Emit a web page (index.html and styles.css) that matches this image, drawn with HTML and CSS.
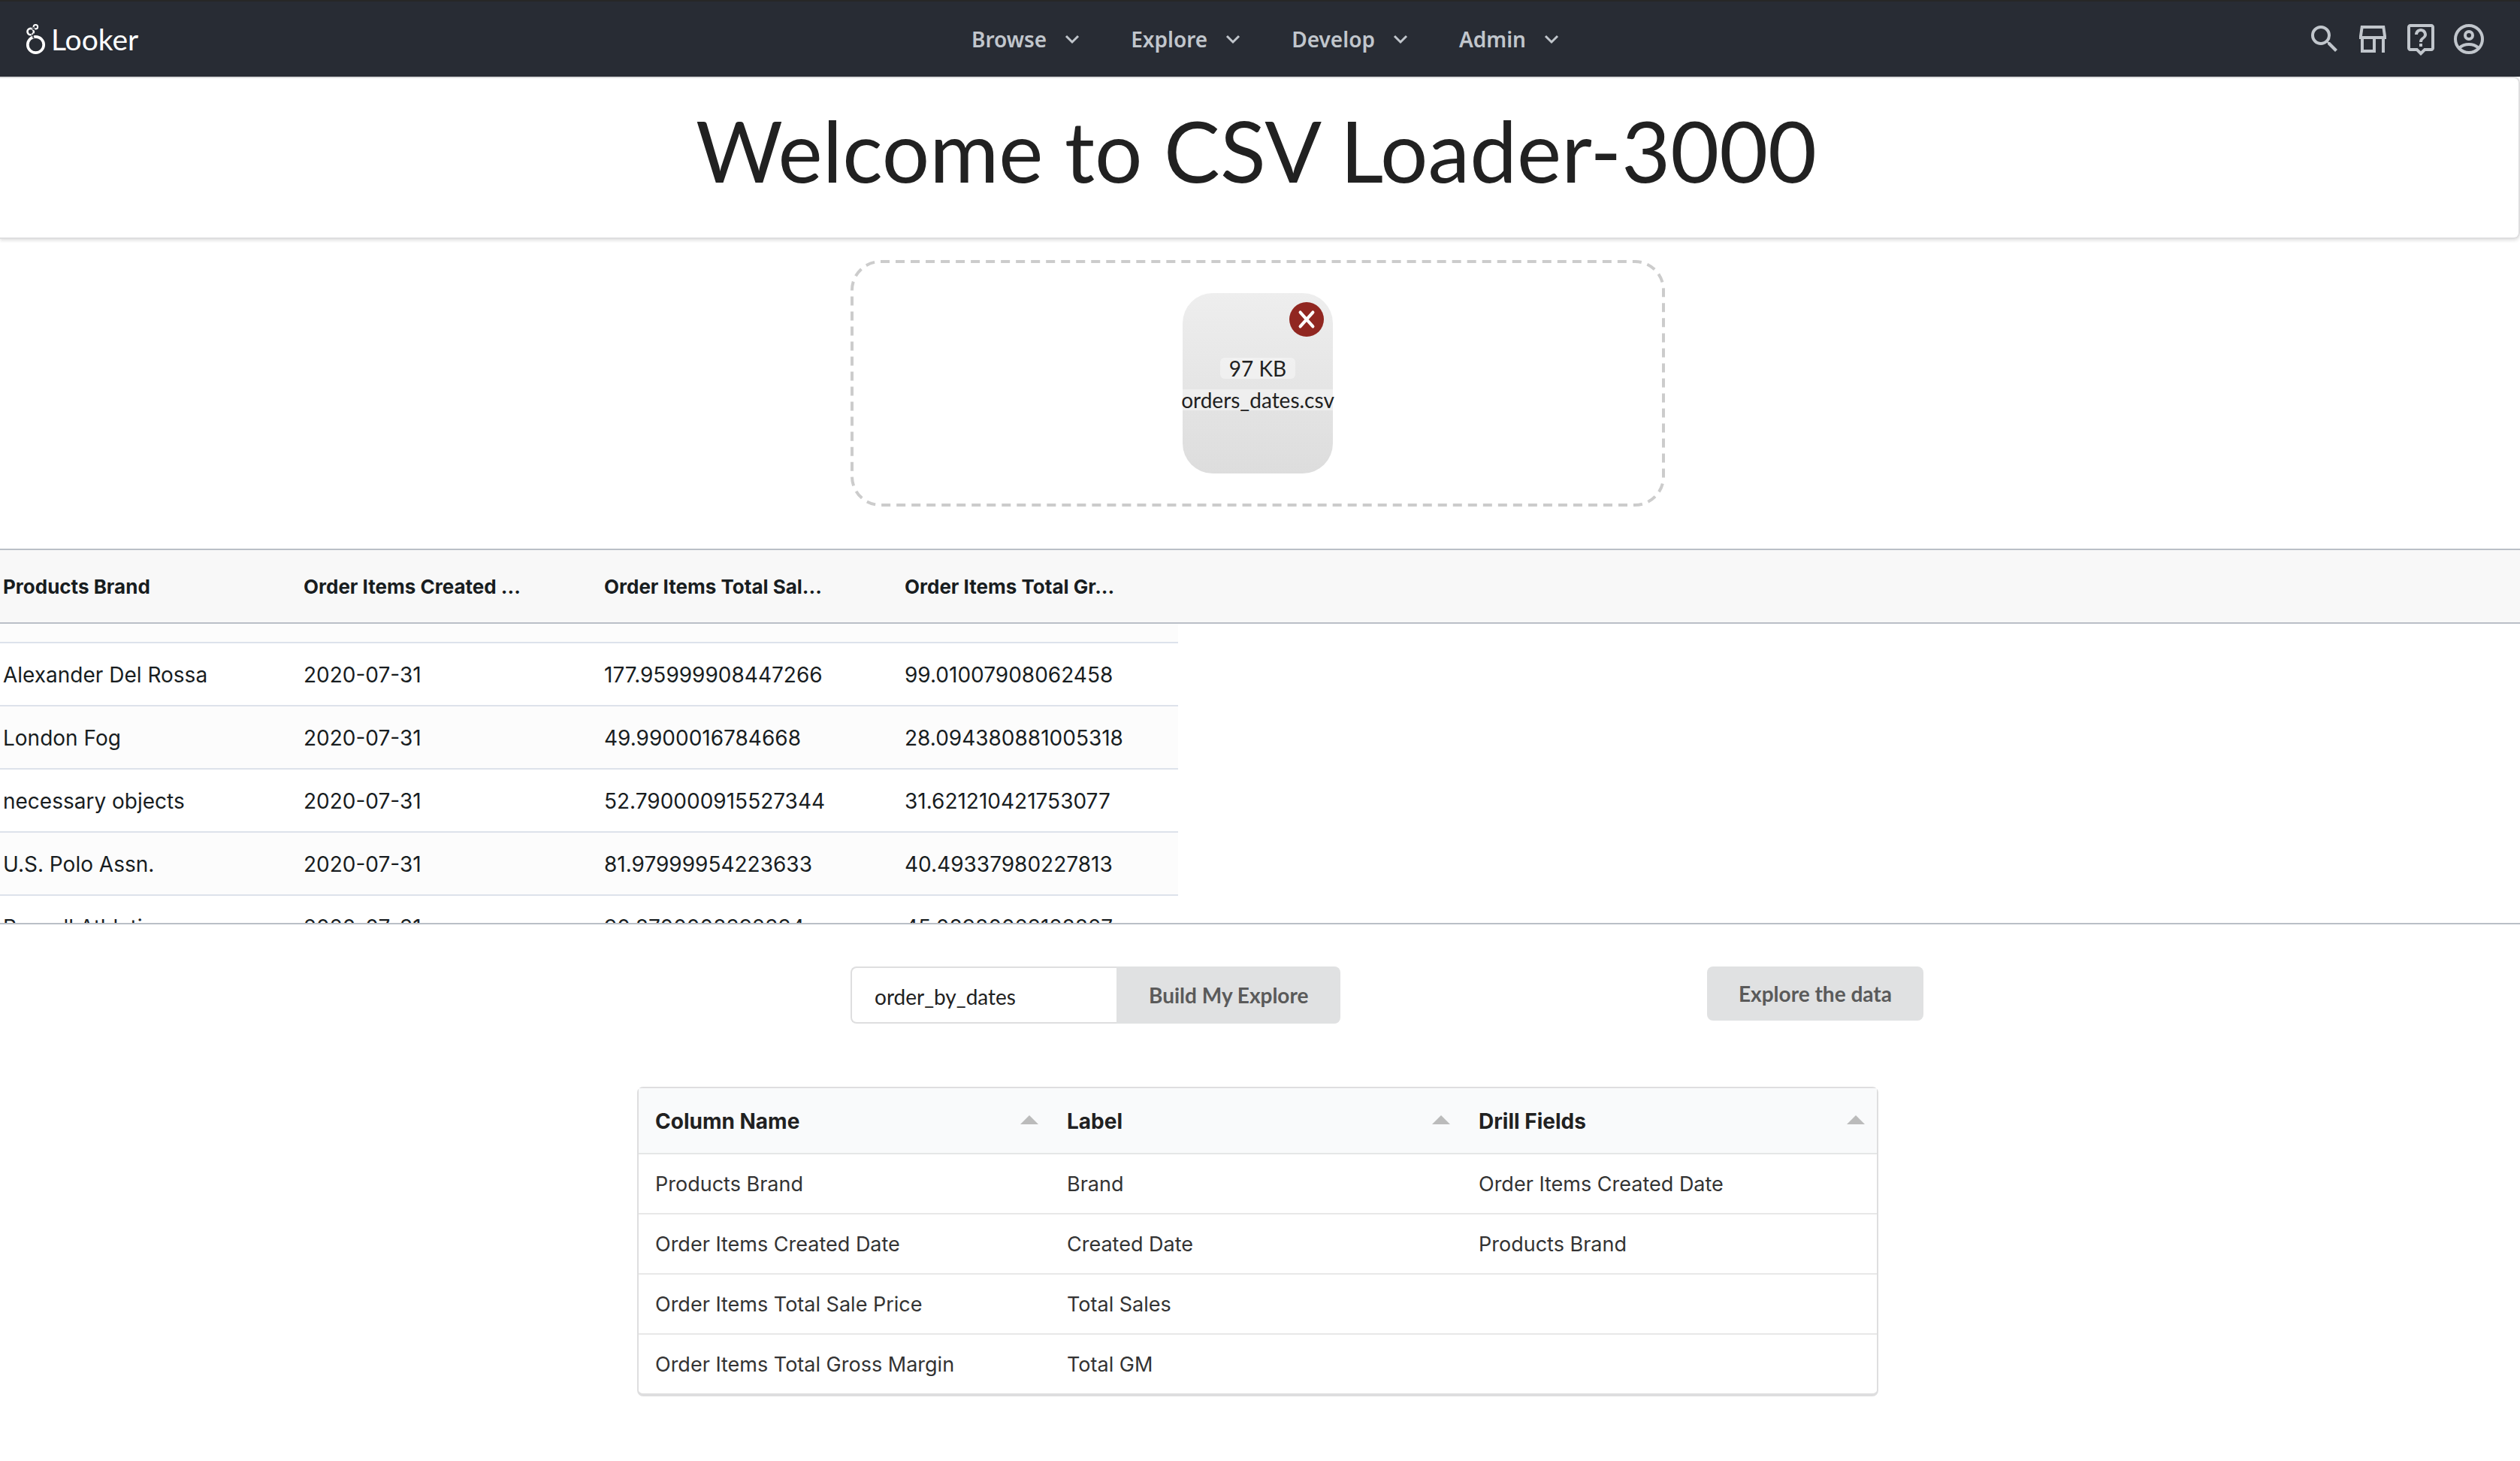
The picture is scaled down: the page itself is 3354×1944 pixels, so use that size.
FILE: index.html
```html
<!DOCTYPE html>
<html lang="en">
<head>
<meta charset="utf-8">
<title>CSV Loader-3000</title>
<link rel="stylesheet" href="styles.css">
</head>
<body>
<header class="topbar">
  <a class="logo" href="#">
    <svg class="logo-mark" viewBox="0 0 28 44" aria-hidden="true">
      <g fill="none" stroke="#fff">
        <circle cx="13.5" cy="29.5" r="10.7" stroke-width="3.7"/>
        <circle cx="6.7" cy="12.1" r="4.2" stroke-width="2.6"/>
        <circle cx="13.4" cy="5.7" r="2.8" stroke-width="2"/>
      </g>
      <g fill="none" stroke="#282c34" stroke-width="1.3">
        <path d="M8 15.5l3.4 5.500M10.800 14.500l-1 6M8.500 8l5 3M10.500 6l1.500 4"/>
      </g>
    </svg>
    <span>Looker</span>
  </a>
  <nav class="menu">
    <button class="menu-item" type="button">Browse<svg viewBox="0 0 32 32"><path d="M8 12l8 8 8-8"/></svg></button>
    <button class="menu-item" type="button">Explore<svg viewBox="0 0 32 32"><path d="M8 12l8 8 8-8"/></svg></button>
    <button class="menu-item" type="button">Develop<svg viewBox="0 0 32 32"><path d="M8 12l8 8 8-8"/></svg></button>
    <button class="menu-item" type="button">Admin<svg viewBox="0 0 32 32"><path d="M8 12l8 8 8-8"/></svg></button>
  </nav>
  <div class="tools">
    <button class="tool" type="button" aria-label="Search"><svg viewBox="0 0 24 24"><path d="M15.500 14h-.79l-.28-.27A6.470 6.470 0 0 0 16 9.500 6.500 6.500 0 1 0 9.500 16c1.610 0 3.090-.59 4.230-1.570l.27.280v.79l5 4.990L20.490 19l-4.990-5zm-6 0C7.010 14 5 11.990 5 9.500S7.010 5 9.500 5 14 7.010 14 9.500 11.990 14 9.500 14z"/></svg></button>
    <button class="tool" type="button" aria-label="Marketplace"><svg viewBox="0 0 24 24"><path fill-rule="evenodd" d="M4 3h16l1 7v2h-1v9h-2v-9h-4v9H4v-9H3v-2zM5.700 5L5 10h14l-.7-5zM6 12v7h6v-7z"/></svg></button>
    <button class="tool" type="button" aria-label="Help"><svg viewBox="0 0 24 24"><path d="M19 2H5c-1.110 0-2 .9-2 2v14c0 1.100.89 2 2 2h4l3 3 3-3h4c1.100 0 2-.9 2-2V4c0-1.100-.9-2-2-2zm0 16h-4.830l-.59.590L12 20.170l-1.590-1.590-.58-.58H5V4h14v14zm-8-3h2v2h-2zm1-8c1.100 0 2 .9 2 2 0 2-3 1.750-3 5h2c0-2.250 3-2.500 3-5 0-2.210-1.790-4-4-4s-4 1.790-4 4h2c0-1.100.9-2 2-2z"/></svg></button>
    <button class="tool" type="button" aria-label="Account"><svg viewBox="0 0 24 24"><g fill="none" stroke="currentColor" stroke-width="2"><circle cx="12" cy="12" r="9"/><circle cx="12" cy="9.500" r="2.500"/><path d="M5.500 18c3.700-3.300 9.300-3.300 13 0"/></g></svg></button>
  </div>
</header>

<main class="page">
  <section class="hero"><h1>Welcome to CSV Loader-3000</h1></section>

  <section class="thirds">
    <div class="dropzone">
      <svg class="dropzone-outline" aria-hidden="true"><rect x="2" y="2" rx="38" pathLength="2740"/></svg>
      <div class="file">
        <button class="remove" type="button" aria-label="Remove file"><svg viewBox="0 0 44 44"><path d="M14 13l16 18M30 13L14 31"/></svg></button>
        <span class="chip">97 KB</span>
        <span class="chip">orders_dates.csv</span>
      </div>
    </div>
  </section>

  <table class="grid">
    <thead>
      <tr><th>Products Brand</th><th>Order Items Created ...</th><th>Order Items Total Sal...</th><th>Order Items Total Gr...</th></tr>
    </thead>
    <tbody>
      <tr class="cut"><td></td><td></td><td></td><td></td></tr>
      <tr><td>Alexander Del Rossa</td><td>2020-07-31</td><td>177.95999908447266</td><td>99.01007908062458</td></tr>
      <tr><td>London Fog</td><td>2020-07-31</td><td>49.9900016784668</td><td>28.094380881005318</td></tr>
      <tr><td>necessary objects</td><td>2020-07-31</td><td>52.790000915527344</td><td>31.621210421753077</td></tr>
      <tr><td>U.S. Polo Assn.</td><td>2020-07-31</td><td>81.97999954223633</td><td>40.49337980227813</td></tr>
      <tr><td>Russell Athletic</td><td>2020-07-31</td><td>90.8700008392334</td><td>45.08980023128827</td></tr>
    </tbody>
  </table>

  <section class="thirds actions">
    <form class="build">
      <input type="text" value="order_by_dates" aria-label="Explore name">
      <button class="btn" type="button">Build My Explore</button>
    </form>
    <button class="btn explore" type="button">Explore the data</button>
  </section>

  <div class="fields-wrap">
    <table class="fields">
      <thead>
        <tr><th>Column Name</th><th>Label</th><th>Drill Fields</th></tr>
      </thead>
      <tbody>
        <tr><td>Products Brand</td><td>Brand</td><td>Order Items Created Date</td></tr>
        <tr><td>Order Items Created Date</td><td>Created Date</td><td>Products Brand</td></tr>
        <tr><td>Order Items Total Sale Price</td><td>Total Sales</td><td></td></tr>
        <tr><td>Order Items Total Gross Margin</td><td>Total GM</td><td></td></tr>
      </tbody>
    </table>
  </div>
</main>
</body>
</html>
```
FILE: styles.css
```css
* { box-sizing: border-box; }

body {
  margin: 0;
  background: #fff;
  color: #212121;
  font-family: Lato, "Liberation Sans", sans-serif;
  font-size: 28px;
  line-height: 40px;
}

button, input { font: inherit; color: inherit; margin: 0; }
button { border: 0; background: none; padding: 0; }

.topbar {
  display: grid;
  grid-template-columns: 1fr auto 1fr;
  align-items: center;
  height: 102px;
  padding: 0 44px 0 34px;
  border-top: 2px solid #272727;
  background: #282c34;
  color: #c1c6cc;
}

.logo {
  display: flex;
  align-items: center;
  gap: 6px;
  color: #fff;
  font-size: 39px;
  text-decoration: none;
}
.logo-mark { width: 28px; height: 44px; }

.menu {
  display: flex;
  gap: 62px;
  padding-left: 30px;
  font-family: "Noto Sans", "Open Sans", sans-serif;
  font-weight: 600;
}
.menu-item { display: flex; align-items: center; gap: 18px; }
.menu-item svg {
  width: 32px;
  height: 32px;
  fill: none;
  stroke: currentColor;
  stroke-width: 3;
}

.tools { display: flex; justify-content: flex-end; gap: 16px; }
.tool { width: 48px; height: 48px; }
.tool svg { display: block; fill: currentColor; }

.page { overflow: clip; }

.hero {
  padding: 24px 8px 44px 0;
  border: 2px solid #dededf;
  border-left: 0;
  border-radius: 0 8px 8px 0;
  box-shadow: 0 2px 4px rgba(34, 36, 38, .14);
  text-align: center;
}
.hero h1 {
  margin: 0;
  font-size: 112px;
  font-weight: 400;
  line-height: 144px;
}

.thirds {
  display: grid;
  grid-template-columns: repeat(3, 1fr);
  gap: 56px;
  margin: 28px -2px 56px -8px;
}

.dropzone {
  position: relative;
  grid-column: 2;
  display: flex;
  justify-content: center;
  padding: 44px;
}
.dropzone-outline {
  position: absolute;
  inset: 0;
  width: 100%;
  height: 100%;
}
.dropzone-outline rect {
  width: calc(100% - 4px);
  height: calc(100% - 4px);
  fill: none;
  stroke: #ccc;
  stroke-width: 4;
  stroke-dasharray: 12 8;
}

.file {
  position: relative;
  display: flex;
  flex-direction: column;
  align-items: center;
  gap: 14px;
  width: 200px;
  height: 240px;
  padding-top: 86px;
  border-radius: 40px;
  background: linear-gradient(#eee, #ddd);
}
.chip {
  padding: 0 12px;
  border-radius: 6px;
  background: rgba(255, 255, 255, .4);
  line-height: 28px;
}
.remove {
  position: absolute;
  top: 12px;
  right: 12px;
  width: 46px;
  height: 46px;
  border-radius: 50%;
  background: #912721;
}
.remove svg {
  display: block;
  fill: none;
  stroke: #fff;
  stroke-width: 4;
  stroke-linecap: round;
}

.grid {
  display: block;
  border: solid #babfc7;
  border-width: 2px 0;
  color: #181d1f;
  font-family: Inter, "Liberation Sans", sans-serif;
}
.grid thead, .grid tbody { display: block; }
.grid thead { border-bottom: 2px solid #babfc7; background: #f8f8f8; }
.grid tbody { height: 398px; overflow: hidden; }
.grid tr {
  display: grid;
  grid-template-columns: repeat(3, 400px) 368px;
  width: 1568px;
}
.grid th, .grid td { padding: 2px 4px 0; text-align: left; white-space: nowrap; }
.grid th { font-size: 26px; font-weight: 700; line-height: 94px; }
.grid td { height: 82px; line-height: 80px; }
.grid tbody tr { border-bottom: 2px solid #dde2eb; }
.grid tbody tr:nth-child(odd) { background: #fcfcfc; }
.grid tbody tr:nth-child(even) { background: #fff; }
.grid .cut td { height: 24px; }

.actions { align-items: start; margin-top: 56px; margin-bottom: 84px; }
.build { grid-column: 2; display: flex; }
.build input {
  width: 354px;
  height: 76px;
  padding: 4px 30px 0;
  border: 2px solid #dededf;
  border-right: 0;
  border-radius: 8px 0 0 8px;
  background: #fff;
}
.btn {
  height: 72px;
  padding: 0 42px;
  border-radius: 8px;
  background: #e0e1e2;
  color: #5a5a5a;
  font-weight: 700;
}
.build .btn { height: 76px; padding: 0 43px; border-radius: 0 8px 8px 0; }
.explore { justify-self: start; }

.fields-wrap { padding-right: 6px; }
.fields {
  width: min(1652px, 100%);
  margin: 0 auto;
  border: 2px solid #dededf;
  border-bottom-width: 4px;
  border-radius: 8px;
  border-spacing: 0;
  table-layout: fixed;
  color: #333;
  font-family: Inter, "Liberation Sans", sans-serif;
}
.fields th, .fields td { height: 80px; padding: 2px 22px 0; text-align: left; }
.fields th {
  height: 88px;
  border-bottom: 2px solid #e5e7e7;
  background: #f9fafb;
  color: #212121;
}
.fields th:not(:last-child) { width: 548px; }
.fields th::after {
  content: "";
  float: right;
  margin: 12px -6px 0 0;
  border: 12px solid transparent;
  border-top: 0;
  border-bottom-color: #bbb;
}
.fields td { border-bottom: 2px solid #e8e8e8; font-size: 27px; }
.fields tbody tr:last-child td { border-bottom: 0; height: 78px; }
```
